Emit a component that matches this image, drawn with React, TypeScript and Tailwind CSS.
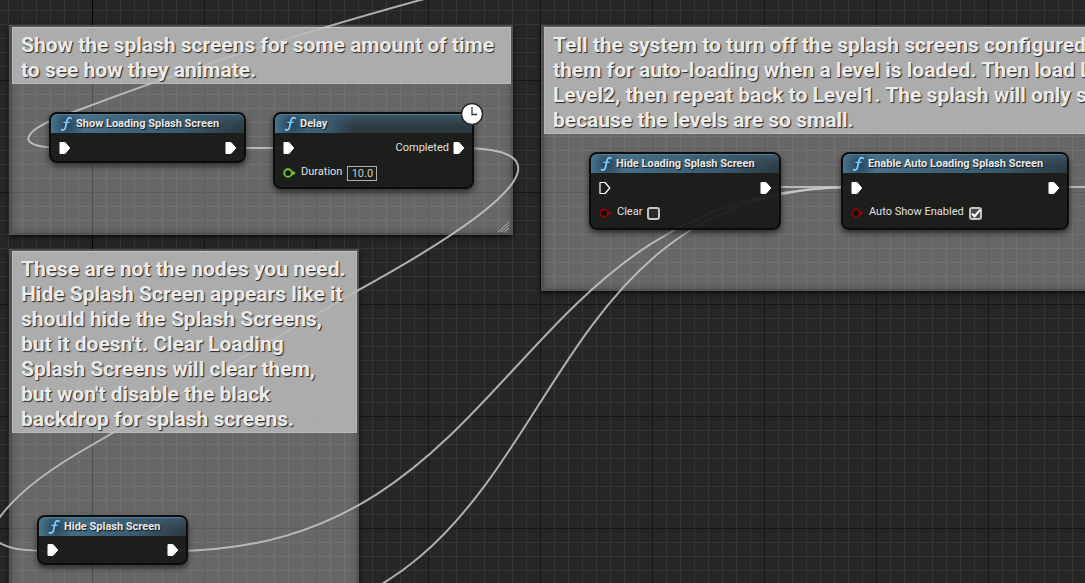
import type { ReactNode } from "react";

const GRID =
  "bg-[#262626] bg-[linear-gradient(to_right,#050505_1px,transparent_1px),linear-gradient(to_right,#161616_1px,transparent_1px),linear-gradient(to_bottom,#161616_1px,transparent_1px),linear-gradient(to_right,#353535_1px,transparent_1px),linear-gradient(to_bottom,#353535_1px,transparent_1px)] bg-[size:4000px_100%,112px_112px,112px_112px,14px_14px,14px_14px] bg-[position:92px_0,92px_0,0_80px,8px_0,0_10px]";

function Comment({ place, title, resizable = false }: { place: string; title: string; resizable?: boolean }) {
  return (
    <section
      className={`absolute flex flex-col border-2 border-l-3 border-[#5c5c5c]/80 bg-white/30 bg-clip-padding shadow-[0_2px_5px_rgba(0,0,0,0.7),inset_0_0_7px_rgba(0,0,0,0.25)] ${place}`}
    >
      <h2 className="relative z-10 border border-white/15 border-t-white/35 bg-[#b8b8b8]/85 px-2 pt-[5px] text-[21px] leading-[25px] font-bold whitespace-pre text-[#ebebeb] [text-shadow:1px_1px_1px_#222]">
        {title}
      </h2>
      {resizable && (
        <svg className="mt-auto self-end" width="14" height="12" viewBox="0 0 14 12" stroke="#b4b4b4" fill="none" aria-hidden="true">
          <path d="M1 11 12 1M4 11l8-7M7.500 11l4.500-4" />
        </svg>
      )}
    </section>
  );
}

function ExecPin({ connected = true }: { connected?: boolean }) {
  return (
    <svg width="12" height="14" viewBox="0 0 12 14" className="shrink-0" aria-hidden="true">
      <path
        d="M1 1.500h5L10.800 7 6 12.500H1z"
        fill={connected ? "#fff" : "none"}
        stroke="#fff"
        strokeWidth={connected ? 1 : 1.200}
        strokeLinejoin="round"
      />
    </svg>
  );
}

function DataPin({ color }: { color: string }) {
  return (
    <svg width="13" height="10" viewBox="0 0 13 10" className="shrink-0" aria-hidden="true">
      <circle cx="5" cy="5" r="3.800" fill="#0c0c0c" stroke={color} strokeWidth="1.900" />
      <path d="M9.300 2.600 12.900 5 9.300 7.400z" fill={color} />
    </svg>
  );
}

function Node({ place, title, children }: { place: string; title: string; children: ReactNode }) {
  return (
    <article
      className={`absolute z-20 flex flex-col rounded-lg border-2 border-[#0b0c0b] bg-[#161816]/92 shadow-[0_3px_6px_rgba(0,0,0,0.6)] ${place}`}
    >
      <header className="mb-0.5 flex h-[19px] overflow-hidden rounded-t-md border-t border-[#4f7e9c] bg-[linear-gradient(to_bottom,#3d5564,#2f3e48_50%,#2a353c)]">
        <div className="flex items-center gap-1 bg-[radial-gradient(circle_at_16px_10px,rgba(20,42,58,0.65),rgba(20,42,58,0)_18px),linear-gradient(to_right,#4c7994,#3e6379_40%,#3a5c70_65%,rgba(56,86,104,0))] pr-7 pl-[9px]">
          <FunctionIcon />
          <h3 className="text-[11px] leading-4 font-bold whitespace-nowrap text-[#e6e9eb] [text-shadow:1px_1px_1px_#111]">{title}</h3>
        </div>
      </header>
      {children}
    </article>
  );
}

function FunctionIcon() {
  return (
    <svg width="12" height="16" viewBox="0 0 12 16" fill="none" stroke="#7cc8fb" strokeLinecap="round" aria-hidden="true">
      <path d="M11 2.300C9.200.8 7.600 2 7.100 4.300L5.600 11C5.100 13.400 3.600 14.700 1.500 13.600" strokeWidth="1.800" />
      <path d="M3.800 6.300h5.500" strokeWidth="1.200" />
    </svg>
  );
}

function ExecRow({ input = true, output }: { input?: boolean; output?: string }) {
  return (
    <div className="flex h-[26px] items-center justify-between pr-[7px] pl-2">
      <ExecPin connected={input} />
      <div className="flex items-center gap-1">
        {output && <span className="text-[11px] text-[#e0e0e0]">{output}</span>}
        <ExecPin />
      </div>
    </div>
  );
}

function CheckRow({ id, label, checked = false }: { id: string; label: string; checked?: boolean }) {
  return (
    <div className="flex h-6 items-center pl-2">
      <DataPin color="#8c0606" />
      <label htmlFor={id} className="mx-[5px] pb-0.5 text-[11px] leading-4 whitespace-nowrap text-[#e0e0e0]">
        {label}
      </label>
      <span className="relative flex">
        <input
          id={id}
          type="checkbox"
          defaultChecked={checked}
          className="peer size-[13px] appearance-none rounded-[3px] border-2 border-[#c4c4c4] bg-[#292929] checked:bg-[#4a4a4a]"
        />
        <svg className="pointer-events-none absolute inset-0 hidden peer-checked:block" viewBox="0 0 13 13" width="13" height="13" fill="none" aria-hidden="true">
          <path d="m3 6.500 2.500 3L11 3" stroke="#fff" strokeWidth="2" />
        </svg>
      </span>
    </div>
  );
}

const wires = [
  "M64 148C10 148 20 130 76 111 150 83 215 61 265 46 330 25 370 14 424 -1",
  "M230 148H288",
  "M460 148C562 148 532 195 355 292L92 445C60 463 20 489 0 517-12 533-6 541 0 543 12 550 30 551 53 551",
  "M172 551C521 551 507 187 856 187",
  "M220 625C578 625 498 187 856 187",
  "M765 187H856",
  "M1053 187H1100",
];

export default function App() {
  return (
    <main className={`relative h-screen w-full overflow-hidden font-[Roboto,sans-serif] ${GRID}`}>
      <Comment
        place="left-[9px] top-[25px] h-[210px] w-[504px]"
        title={"Show the splash screens for some amount of time\nto see how they animate."}
        resizable
      />
      <Comment
        place="left-[9px] top-[249px] h-[400px] w-[350px]"
        title={
          "These are not the nodes you need.\nHide Splash Screen appears like it\nshould hide the Splash Screens,\nbut it doesn't. Clear Loading\nSplash Screens will clear them,\nbut won't disable the black\nbackdrop for splash screens."
        }
      />
      <Comment
        place="left-[541px] top-[25px] h-[266px] w-[760px]"
        title={
          "Tell the system to turn off the splash screens configured and set\nthem for auto-loading when a level is loaded. Then load Level1,\nLevel2, then repeat back to Level1. The splash will only show\nbecause the levels are so small."
        }
      />

      <svg className="pointer-events-none absolute inset-0 size-full" fill="none" stroke="#c8c8c8" strokeOpacity="0.85" strokeWidth="2" aria-hidden="true">
        {wires.map((d) => (
          <path key={d} d={d} />
        ))}
      </svg>

      <Node place="left-[49px] top-[112px] w-[197px] h-[51px]" title="Show Loading Splash Screen">
        <ExecRow />
      </Node>
      <Node place="left-[273px] top-[112px] w-[201px] h-[77px]" title="Delay">
        <ExecRow output="Completed" />
        <div className="flex h-6 items-center pl-2">
          <DataPin color="#76c82c" />
          <label htmlFor="duration" className="mx-[5px] pb-0.5 text-[11px] leading-4 text-[#e0e0e0]">
            Duration
          </label>
          <input
            id="duration"
            defaultValue="10.0"
            className="h-[15px] w-[30px] border border-[#b0b0b0] bg-transparent text-center text-[11px] leading-3 text-[#c8c8c8]"
          />
        </div>
        <svg className="absolute -top-3 -right-3" width="24" height="24" viewBox="0 0 24 24" aria-hidden="true">
          <circle cx="12" cy="12" r="10.500" fill="#fff" stroke="#2a2a2a" strokeWidth="1.500" />
          <path d="M12 5v7.500h5" fill="none" stroke="#333" strokeWidth="1.300" />
        </svg>
      </Node>
      <Node place="left-[589px] top-[152px] w-[192px] h-[78px]" title="Hide Loading Splash Screen">
        <ExecRow input={false} />
        <CheckRow id="clear" label="Clear" />
      </Node>
      <Node place="left-[841px] top-[152px] w-[228px] h-[78px]" title="Enable Auto Loading Splash Screen">
        <ExecRow />
        <CheckRow id="auto-show" label="Auto Show Enabled" checked />
      </Node>
      <Node place="left-[37px] top-[515px] w-[151px] h-[50px]" title="Hide Splash Screen">
        <ExecRow />
      </Node>
    </main>
  );
}
